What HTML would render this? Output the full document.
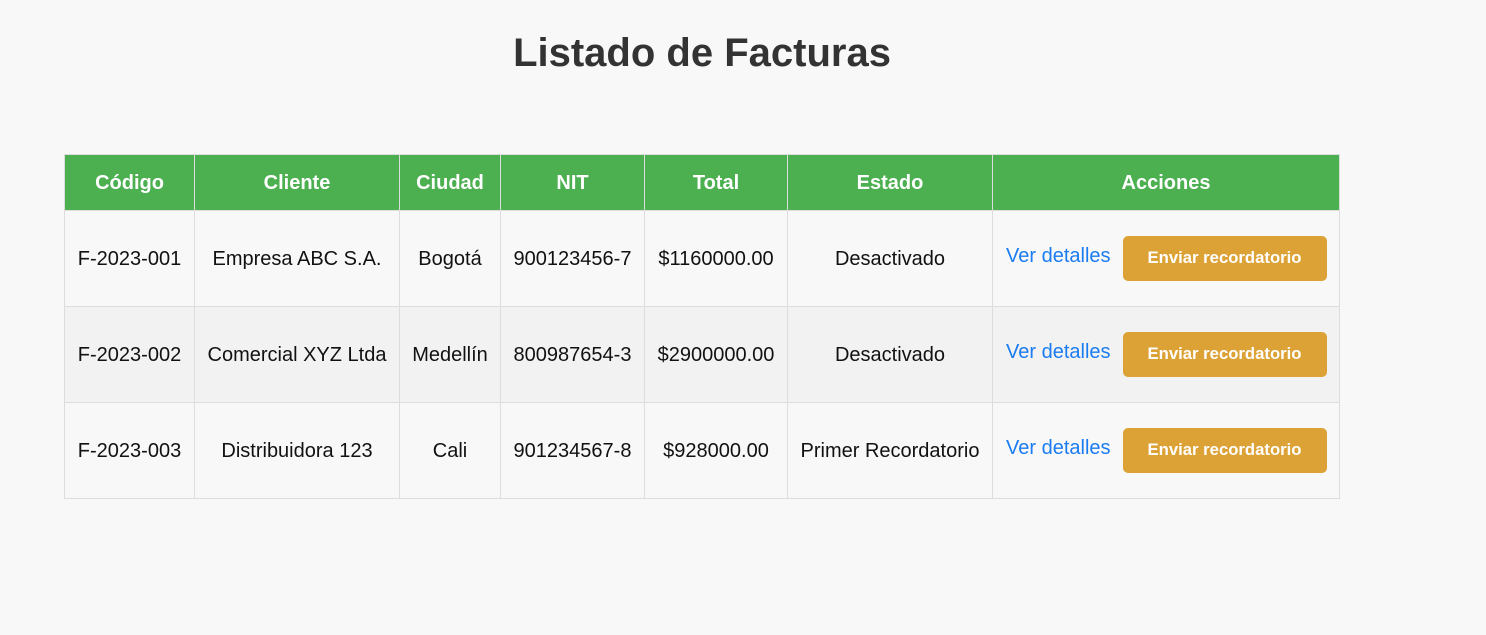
<!DOCTYPE html>
<html><head><meta charset="utf-8"><style>
body{margin:0;background:#f8f8f8;font-family:"Liberation Sans",Arial,sans-serif;width:1486px;height:635px;overflow:hidden}
h1{position:absolute;left:0;width:1404px;top:30px;margin:0;text-align:center;font-size:40px;color:#333;font-weight:bold;line-height:46px}
table{position:absolute;left:64px;top:154px;border-collapse:collapse;table-layout:fixed;width:1275px}
th,td{border:1px solid #ddd;text-align:center;font-size:20px;padding:2px 0 0 0}
th{background:#4caf50;color:#fff;height:53px;font-weight:bold}
td{height:93px;color:#111}
tr.alt td{background:#f2f2f2}
td.act{text-align:left;padding-left:13px;white-space:nowrap}
a{color:#1a7cf0;text-decoration:none;font-size:20px;vertical-align:middle;position:relative;top:-3px}
.btn{display:inline-block;vertical-align:middle;margin-left:12px;width:204px;height:45px;line-height:43px;background:#dda236;color:#fff;border-radius:5px;font-size:16.7px;font-weight:bold;text-align:center;position:relative;top:-1px}
</style></head><body>
<h1>Listado de Facturas</h1>
<table>
<colgroup><col style="width:130px"><col style="width:205px"><col style="width:101px"><col style="width:144px"><col style="width:143px"><col style="width:205px"><col style="width:347px"></colgroup>
<tr><th>Código</th><th>Cliente</th><th>Ciudad</th><th>NIT</th><th>Total</th><th>Estado</th><th>Acciones</th></tr>
<tr><td>F-2023-001</td><td>Empresa ABC S.A.</td><td>Bogotá</td><td>900123456-7</td><td>$1160000.00</td><td>Desactivado</td><td class="act"><a>Ver detalles</a><span class="btn">Enviar recordatorio</span></td></tr>
<tr class="alt"><td>F-2023-002</td><td>Comercial XYZ Ltda</td><td>Medellín</td><td>800987654-3</td><td>$2900000.00</td><td>Desactivado</td><td class="act"><a>Ver detalles</a><span class="btn">Enviar recordatorio</span></td></tr>
<tr><td>F-2023-003</td><td>Distribuidora 123</td><td>Cali</td><td>901234567-8</td><td>$928000.00</td><td>Primer Recordatorio</td><td class="act"><a>Ver detalles</a><span class="btn">Enviar recordatorio</span></td></tr>
</table>
</body></html>
